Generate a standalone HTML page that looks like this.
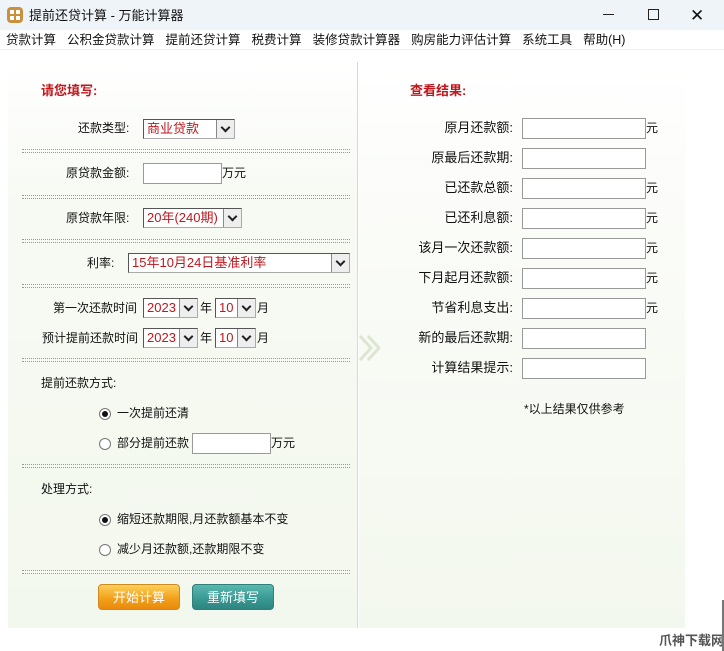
<!DOCTYPE html>
<html><head><meta charset="utf-8"><style>
*{margin:0;padding:0;box-sizing:border-box}
body{width:724px;height:651px;overflow:hidden;background:#fff;font-family:"Liberation Sans","Noto Sans CJK SC",sans-serif;font-size:12px;line-height:1.25;color:#111;position:relative}
.a{position:absolute;white-space:nowrap}
.title{left:0;top:0;width:724px;height:30px;background:#eff4f9}
.menu{left:0;top:30px;width:724px;height:20px;background:#fff;border-bottom:1px solid #eef0f2}
.left{left:8px;top:62px;width:350px;height:566px;background:linear-gradient(#fff 0%,#f7faf3 25%,#f3f8ee 100%);border-right:1px solid #cfe0c4}
.right{left:359px;top:62px;width:326px;height:566px;background:linear-gradient(#fff 0%,#f9fbf6 40%,#f3f8ee 100%)}
.dot{position:absolute;left:22px;width:328px;height:4px;border-top:1px dotted #999;border-bottom:1px dotted #999}
.red{color:#c0161c;font-weight:bold;font-size:13px}
.sel{position:absolute;height:20px;background:#fff;border:1px solid #aaa;border-top-color:#555;border-left-color:#555;color:#c0161c;font-size:13px;line-height:18px;padding-left:3px}
.sel b{position:absolute;right:0;top:0;width:18px;height:18px;background:#eee;border-left:1px solid #888;font-weight:normal}
.sel b:after{content:"";position:absolute;left:5px;top:4px;width:5px;height:5px;border-right:2px solid #222;border-bottom:2px solid #222;transform:rotate(45deg)}
.inp{position:absolute;height:21px;background:#fff;border:1px solid #999}
.rad{position:absolute;width:12px;height:12px;border:1px solid #777;border-radius:50%;background:#fff}
.rad.on:after{content:"";position:absolute;left:2px;top:2px;width:6px;height:6px;border-radius:50%;background:#111}
.btn{position:absolute;width:82px;height:26px;border-radius:4px;color:#fff;text-align:center;line-height:26px;font-size:13px}
.m span{margin-right:11px}
.r{font-size:13px;width:163px;text-align:right;left:350px}
</style></head><body>
<div class="a title"></div>
<div class="a" style="left:7px;top:7px;width:16px;height:16px;border-radius:4px;background:#c9913e"></div>
<div class="a" style="left:10px;top:10px;width:4px;height:4px;background:#fff"></div><div class="a" style="left:16px;top:10px;width:4px;height:4px;background:#fff"></div><div class="a" style="left:10px;top:16px;width:4px;height:4px;background:#fff"></div><div class="a" style="left:16px;top:16px;width:4px;height:4px;background:#fff"></div>
<div class="a" style="left:29px;top:8px;font-size:13px">提前还贷计算 - 万能计算器</div>
<div class="a" style="left:603px;top:14px;width:11px;border-top:1px solid #222"></div>
<div class="a" style="left:648px;top:9px;width:11px;height:11px;border:1px solid #222"></div>
<div class="a" style="left:690px;top:5px;font-size:17px">✕</div>
<div class="a menu"></div>
<div class="a m" style="left:6px;top:33px;font-size:12.5px"><span>贷款计算</span><span>公积金贷款计算</span><span>提前还贷计算</span><span>税费计算</span><span>装修贷款计算器</span><span>购房能力评估计算</span><span>系统工具</span><span>帮助(H)</span></div>
<div class="a left"></div>
<div class="a right"></div>
<div class="a red" style="left:41px;top:83px">请您填写:</div>
<div class="a" style="left:78px;top:121px">还款类型:</div>
<div class="sel" style="left:143px;top:119px;width:92px">商业贷款<b></b></div>
<div class="dot" style="top:149px"></div>
<div class="a" style="left:66px;top:166px">原贷款金额:</div>
<div class="inp" style="left:143px;top:163px;width:79px"></div>
<div class="a" style="left:222px;top:166px">万元</div>
<div class="dot" style="top:195px"></div>
<div class="a" style="left:66px;top:211px">原贷款年限:</div>
<div class="sel" style="left:143px;top:208px;width:99px">20年(240期)<b></b></div>
<div class="dot" style="top:239px"></div>
<div class="a" style="left:87px;top:256px">利率:</div>
<div class="sel" style="left:128px;top:253px;width:222px">15年10月24日基准利率<b></b></div>
<div class="dot" style="top:284px"></div>
<div class="a" style="left:53px;top:301px">第一次还款时间</div>
<div class="sel" style="left:143px;top:298px;width:55px">2023<b></b></div>
<div class="a" style="left:200px;top:301px">年</div>
<div class="sel" style="left:215px;top:298px;width:41px">10<b></b></div>
<div class="a" style="left:257px;top:301px">月</div>
<div class="a" style="left:42px;top:331px">预计提前还款时间</div>
<div class="sel" style="left:143px;top:328px;width:55px">2023<b></b></div>
<div class="a" style="left:200px;top:331px">年</div>
<div class="sel" style="left:215px;top:328px;width:41px">10<b></b></div>
<div class="a" style="left:257px;top:331px">月</div>
<div class="dot" style="top:358px"></div>
<div class="a" style="left:41px;top:376px">提前还款方式:</div>
<div class="rad on" style="left:99px;top:408px"></div>
<div class="a" style="left:117px;top:406px">一次提前还清</div>
<div class="rad" style="left:99px;top:438px"></div>
<div class="a" style="left:117px;top:436px">部分提前还款</div>
<div class="inp" style="left:192px;top:433px;width:79px"></div>
<div class="a" style="left:271px;top:436px">万元</div>
<div class="dot" style="top:464px"></div>
<div class="a" style="left:41px;top:482px">处理方式:</div>
<div class="rad on" style="left:99px;top:514px"></div>
<div class="a" style="left:117px;top:512px">缩短还款期限,月还款额基本不变</div>
<div class="rad" style="left:99px;top:544px"></div>
<div class="a" style="left:117px;top:542px">减少月还款额,还款期限不变</div>
<div class="dot" style="top:570px"></div>
<div class="btn" style="left:98px;top:584px;background:linear-gradient(#fcd05a,#f3a11b 55%,#e88a0c);border:1px solid #d08a20">开始计算</div>
<div class="btn" style="left:192px;top:584px;background:linear-gradient(#5bb8b0,#3a9a94 55%,#2e8481);border:1px solid #2f7f7a">重新填写</div>
<svg class="a" style="left:358px;top:334px" width="28" height="28" viewBox="0 0 28 28"><path d="M2 2 L13 14 L2 26 M10 2 L21 14 L10 26" fill="none" stroke="#dde6d2" stroke-width="3"/></svg>
<div class="a red" style="left:410px;top:83px">查看结果:</div>
<div class="a r" style="top:120px">原月还款额:</div>
<div class="a r" style="top:150px">原最后还款期:</div>
<div class="a r" style="top:180px">已还款总额:</div>
<div class="a r" style="top:210px">已还利息额:</div>
<div class="a r" style="top:240px">该月一次还款额:</div>
<div class="a r" style="top:270px">下月起月还款额:</div>
<div class="a r" style="top:300px">节省利息支出:</div>
<div class="a r" style="top:330px">新的最后还款期:</div>
<div class="a r" style="top:360px">计算结果提示:</div>
<div class="inp" style="left:522px;top:118px;width:124px"></div><div class="a" style="left:646px;top:121px">元</div>
<div class="inp" style="left:522px;top:148px;width:124px"></div>
<div class="inp" style="left:522px;top:178px;width:124px"></div><div class="a" style="left:646px;top:181px">元</div>
<div class="inp" style="left:522px;top:208px;width:124px"></div><div class="a" style="left:646px;top:211px">元</div>
<div class="inp" style="left:522px;top:238px;width:124px"></div><div class="a" style="left:646px;top:241px">元</div>
<div class="inp" style="left:522px;top:268px;width:124px"></div><div class="a" style="left:646px;top:271px">元</div>
<div class="inp" style="left:522px;top:298px;width:124px"></div><div class="a" style="left:646px;top:301px">元</div>
<div class="inp" style="left:522px;top:328px;width:124px"></div>
<div class="inp" style="left:522px;top:358px;width:124px"></div>
<div class="a" style="left:524px;top:402px">*以上结果仅供参考</div>
<div class="a" style="left:659px;top:633px;font-size:13px;font-weight:bold;color:#555">爪神下载网</div>
<div class="a" style="left:722px;top:600px;width:2px;height:51px;background:#777"></div>
</body></html>
